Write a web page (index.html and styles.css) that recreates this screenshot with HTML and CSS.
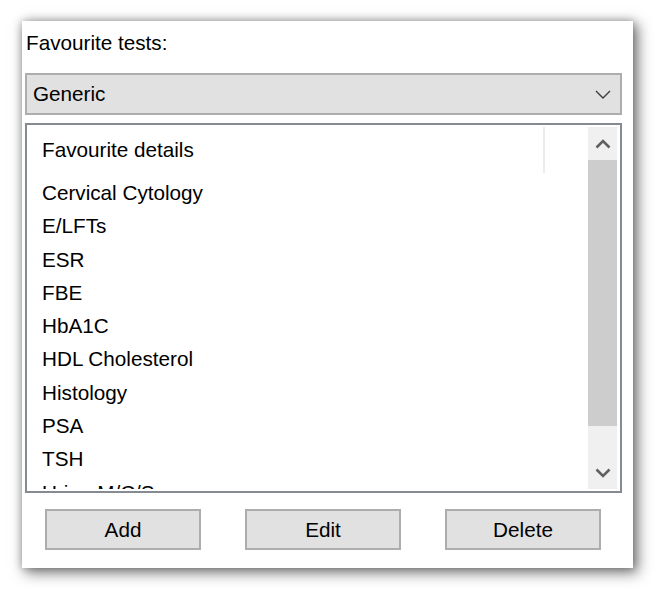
FILE: index.html
```html
<!DOCTYPE html>
<html lang="en">
<head>
<meta charset="utf-8">
<title>Favourite tests</title>
<link rel="stylesheet" href="styles.css">
</head>
<body>
<div class="window">
  <div class="label">Favourite tests:</div>
  <div class="combo">
    <span class="combo-text">Generic</span>
    <svg class="combo-arrow" width="16" height="9" viewBox="0 0 16 9"><polyline points="1,1 8,8 15,1" fill="none" stroke="#3c3c3c" stroke-width="1.4"/></svg>
  </div>
  <div class="listbox">
    <div class="list-content">
      <div class="list-header"><div class="col-head">Favourite details</div></div>
      <ul class="items">
        <li>Cervical Cytology</li>
        <li>E/LFTs</li>
        <li>ESR</li>
        <li>FBE</li>
        <li>HbA1C</li>
        <li>HDL Cholesterol</li>
        <li>Histology</li>
        <li>PSA</li>
        <li>TSH</li>
        <li>Urine M/C/S</li>
      </ul>
    </div>
    <div class="scrollbar">
      <div class="sb-btn"><svg width="16" height="10" viewBox="0 0 16 10"><polyline points="1.5,8.5 8,2 14.5,8.5" fill="none" stroke="#606060" stroke-width="2.6"/></svg></div>
      <div class="sb-thumb"></div>
      <div class="sb-track"></div>
      <div class="sb-btn"><svg width="16" height="10" viewBox="0 0 16 10"><polyline points="1.5,1.5 8,8 14.5,1.5" fill="none" stroke="#606060" stroke-width="2.6"/></svg></div>
    </div>
  </div>
  <div class="buttons">
    <div class="btn">Add</div>
    <div class="btn">Edit</div>
    <div class="btn">Delete</div>
  </div>
</div>
</body>
</html>
```

FILE: styles.css
```css
html, body {
  margin: 0;
  padding: 0;
  background: #ffffff;
}
body {
  font-family: "Liberation Sans", Arial, sans-serif;
  font-size: 20.7px;
  color: #000;
  min-height: 590px;
  padding-top: 21px;
  box-sizing: border-box;
}
.window {
  box-sizing: border-box;
  margin: 0 0 0 22px;
  width: 611px;
  height: 547px;
  background: #fff;
  padding: 10px 11px 0 3px;
  box-shadow: 0 0 8px rgba(0, 0, 0, 0.25), 4px 4px 13px 1px rgba(0, 0, 0, 0.5);
}
.label {
  line-height: 24px;
  height: 24px;
  padding-left: 1px;
}
.combo {
  box-sizing: border-box;
  margin-top: 18px;
  height: 42px;
  background: #e1e1e1;
  border: 2px solid #adadad;
  display: flex;
  align-items: center;
  justify-content: space-between;
  padding: 0 9px 0 6px;
}
.combo-text {
  line-height: 24px;
}
.combo-arrow {
  display: block;
}
.listbox {
  box-sizing: border-box;
  margin-top: 8px;
  height: 370px;
  border: 2px solid #868a92;
  padding: 2px 3px 2px 2px;
  display: flex;
  background: #fff;
}
.list-content {
  flex: 1;
  overflow: hidden;
}
.list-header {
  height: 49px;
}
.col-head {
  box-sizing: border-box;
  width: 516px;
  height: 46px;
  line-height: 45px;
  padding-left: 13px;
  border-right: 2px solid #ececec;
}
.items {
  list-style: none;
  margin: 0;
  padding: 0;
}
.items li {
  line-height: 33.3px;
  height: 33.3px;
  padding-left: 13px;
  white-space: nowrap;
}
.scrollbar {
  width: 29px;
  background: #f0f0f0;
  display: flex;
  flex-direction: column;
}
.sb-btn {
  height: 33px;
  display: flex;
  align-items: center;
  justify-content: center;
}
.sb-btn svg {
  display: block;
}
.sb-thumb {
  height: 266px;
  background: #cdcdcd;
}
.sb-track {
  flex: 1;
}
.buttons {
  display: flex;
  gap: 44px;
  margin-top: 16px;
  padding-left: 20px;
}
.btn {
  box-sizing: border-box;
  width: 156px;
  height: 41px;
  background: #e1e1e1;
  border: 2px solid #adadad;
  display: flex;
  align-items: center;
  justify-content: center;
  line-height: 24px;
}
```
